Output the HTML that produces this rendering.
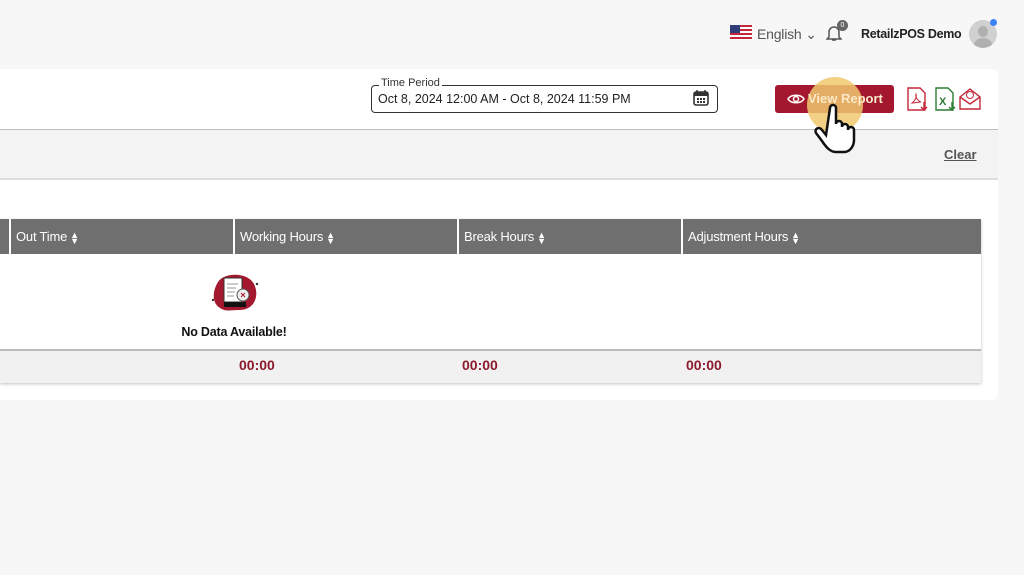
<!DOCTYPE html>
<html><head><meta charset="utf-8"><style>
*{margin:0;padding:0;box-sizing:border-box}
body{width:1024px;height:575px;background:#f7f7f7;font-family:"Liberation Sans",sans-serif;position:relative;overflow:hidden;color:#222}
.abs{position:absolute}
.card{left:0;top:69px;width:998px;height:331px;background:#fff;border-radius:0 6px 6px 0}
.th{top:219px;height:35px;background:#6f6f6f;color:#fff;font-size:13px;line-height:35px;padding-left:5px;letter-spacing:-0.2px}
.th span{font-size:9px;display:inline-block;line-height:6px;vertical-align:middle;margin-left:3px}
.ft{color:#8b1a2b;font-weight:bold;font-size:14px;top:357px}
</style></head><body>
<svg class="abs" style="left:730px;top:25px" width="22" height="15"><rect width="22" height="15" fill="#fff"/><g fill="#c3283a"><rect y="0" width="22" height="2"/><rect y="4" width="22" height="2"/><rect y="8" width="22" height="2"/><rect y="12" width="22" height="2"/></g><rect width="10" height="8" fill="#2f3d7a"/></svg>
<div class="abs" style="left:757px;top:26px;font-size:14px;color:#555;letter-spacing:-0.2px">English ⌄</div>
<svg class="abs" style="left:826px;top:24px" width="16" height="18"><path d="M3 13V8a5 5 0 0 1 10 0v5l2 2H1z M6 16h4" fill="none" stroke="#555" stroke-width="1.5"/></svg>
<div class="abs" style="left:837px;top:20px;width:11px;height:11px;border-radius:50%;background:#666;color:#fff;font-size:7px;text-align:center;line-height:11px">0</div>
<div class="abs" style="left:861px;top:27px;font-size:12.5px;font-weight:bold;color:#222;letter-spacing:-0.3px">RetailzPOS Demo</div>
<div class="abs" style="left:969px;top:20px;width:28px;height:28px;border-radius:50%;background:#d0d0d0;overflow:hidden"><div style="position:absolute;left:9px;top:6px;width:10px;height:11px;border-radius:50%;background:#b0b0b0"></div><div style="position:absolute;left:5px;top:18px;width:18px;height:14px;border-radius:50%;background:#b0b0b0"></div></div>
<div class="abs" style="left:990px;top:19px;width:7px;height:7px;border-radius:50%;background:#3b82f6"></div>
<div class="abs card"></div>
<div class="abs" style="left:0;top:129px;width:998px;height:1px;background:#bdbdbd"></div>
<div class="abs" style="left:0;top:130px;width:998px;height:50px;background:#f3f3f3;border-bottom:2px solid #ddd"></div>
<div class="abs" style="left:944px;top:147px;font-size:13px;font-weight:bold;color:#555;text-decoration:underline">Clear</div>
<div class="abs" style="left:371px;top:85px;width:347px;height:28px;border:1px solid #333;border-radius:4px"></div>
<div class="abs" style="left:379px;top:77px;background:#fff;padding:0 2px;font-size:11px;color:#333">Time Period</div>
<div class="abs" style="left:378px;top:92px;font-size:12.5px;color:#222">Oct 8, 2024 12:00 AM - Oct 8, 2024 11:59 PM</div>
<svg class="abs" style="left:693px;top:89px" width="16" height="17"><rect x="1" y="3" width="14" height="13" rx="2" fill="none" stroke="#333" stroke-width="1.6"/><rect x="1" y="3" width="14" height="4" fill="#333"/><path d="M4 1v3M12 1v3" stroke="#333" stroke-width="1.5"/><g fill="#333"><rect x="4" y="9" width="2" height="2"/><rect x="7" y="9" width="2" height="2"/><rect x="10" y="9" width="2" height="2"/><rect x="4" y="12" width="2" height="2"/><rect x="7" y="12" width="2" height="2"/><rect x="10" y="12" width="2" height="2"/></g></svg>
<div class="abs" style="left:775px;top:85px;width:119px;height:28px;background:#a3182e;border-radius:3px"></div>
<div class="abs" style="left:807px;top:77px;width:56px;height:56px;border-radius:50%;background:rgba(240,200,110,0.85)"></div>
<svg class="abs" style="left:787px;top:92px" width="18" height="14"><path d="M1 7C4 2 14 2 17 7C14 12 4 12 1 7z" fill="none" stroke="#fff" stroke-width="1.5"/><circle cx="9" cy="7" r="2.5" fill="none" stroke="#fff" stroke-width="1.5"/></svg>
<div class="abs" style="left:808px;top:91px;font-size:13px;font-weight:bold;color:#fbe9c8">View Report</div>
<svg class="abs" style="left:812px;top:102px" width="48" height="54"><path d="M18 6c0-4 6-4 6 0v16c0-4 6-4 6 0v3c0-4 6-4 6 0v3c0-4 6-4 6 0v10c0 6-4 12-10 12h-8c-6 0-10-5-14-11l-6-8c-2-4 3-7 6-3l4 5z" fill="#fff" stroke="#111" stroke-width="2.5"/></svg>
<svg class="abs" style="left:907px;top:87px" width="22" height="25"><path d="M1 1h12l5 5v17H1z" fill="#fff" stroke="#c3283a" stroke-width="1.4"/><path d="M5 16c3-2 5-6 4-9-1 3 2 7 5 8-3 0-6 1-9 1z" fill="none" stroke="#c3283a"/><path d="M17 15v8M14 20l3 3 3-3" stroke="#c3283a" stroke-width="1.4" fill="none"/></svg>
<svg class="abs" style="left:935px;top:87px" width="22" height="25"><path d="M1 1h12l5 5v17H1z" fill="#fff" stroke="#2e7d32" stroke-width="1.4"/><text x="4" y="18" font-size="11" font-weight="bold" fill="#2e7d32" font-family="Liberation Sans">X</text><path d="M17 15v8M14 20l3 3 3-3" stroke="#2e7d32" stroke-width="1.4" fill="none"/></svg>
<svg class="abs" style="left:959px;top:86px" width="23" height="25"><path d="M1 11l10-8 10 8v12H1z" fill="#fff" stroke="#c3283a" stroke-width="1.4"/><path d="M1 11l10 7 10-7" fill="none" stroke="#c3283a" stroke-width="1.4"/><circle cx="11" cy="9" r="3.5" fill="none" stroke="#c3283a"/></svg>
<div class="abs" style="left:0;top:219px;width:981px;height:164px;background:#fff;box-shadow:0 1px 3px rgba(0,0,0,.25)"></div>
<div class="abs th" style="left:0;width:9px"></div>
<div class="abs th" style="left:11px;width:222px">Out Time<span>▲<br>▼</span></div>
<div class="abs th" style="left:235px;width:222px">Working Hours<span>▲<br>▼</span></div>
<div class="abs th" style="left:459px;width:222px">Break Hours<span>▲<br>▼</span></div>
<div class="abs th" style="left:683px;width:298px">Adjustment Hours<span>▲<br>▼</span></div>
<svg class="abs" style="left:210px;top:272px" width="50" height="42"><path d="M8 10c6-10 30-10 36 2 6 12 0 26-14 26-10 0-14 2-20-2-8-5-8-16-2-26z" fill="#a3182e"/><rect x="14" y="6" width="18" height="24" fill="#fff" stroke="#333"/><rect x="14" y="30" width="22" height="5" fill="#111"/><path d="M17 12h11M17 16h9M17 20h8M17 24h7" stroke="#999"/><circle cx="33" cy="23" r="6" fill="#eee" stroke="#555"/><path d="M31 21l4 4M35 21l-4 4" stroke="#a3182e"/><circle cx="47" cy="12" r="1.2" fill="#333"/><circle cx="3" cy="28" r="1.2" fill="#333"/></svg>
<div class="abs" style="left:0;width:468px;top:325px;text-align:center;font-size:12.5px;font-weight:bold;color:#111;letter-spacing:-0.2px">No Data Available!</div>
<div class="abs" style="left:0;top:349px;width:981px;height:34px;background:#f1f1f1;border-top:2px solid #bbb"></div>
<div class="abs ft" style="left:239px">00:00</div>
<div class="abs ft" style="left:462px">00:00</div>
<div class="abs ft" style="left:686px">00:00</div>
</body></html>
